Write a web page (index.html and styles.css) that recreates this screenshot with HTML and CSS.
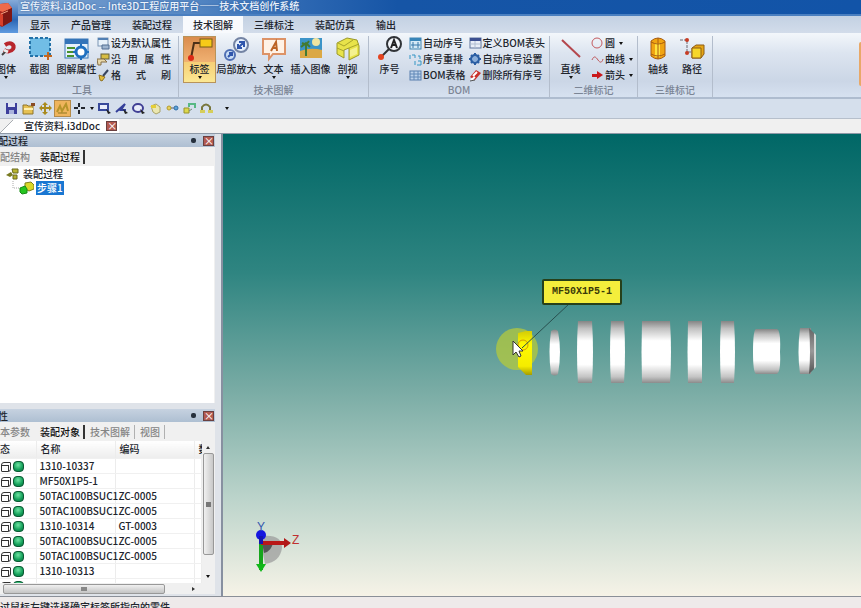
FILE: index.html
```
<!DOCTYPE html>
<html lang="zh-CN">
<head>
    <meta charset="UTF-8">
    <meta name="viewport" content="width=device-width, initial-scale=1.0">
    <title>宣传资料.i3dDoc -- Inte3D工程应用平台</title>
    <link rel="stylesheet" href="styles.css">
</head>
<body>
    <header class="top">
        <div class="logo">
            <svg width="18" height="32" viewBox="0 0 18 32">
                <path d="M0 4L8 3L12 8L12 21L2 27L0 26Z" fill="#a8241c"/>
                <path d="M0 4L8 3L12 8L3 12L0 11Z" fill="#ee6a4c"/>
                <path d="M3 12L12 8V21L3 26Z" fill="#7e1714"/>
                <path d="M0 13L3 15V26L0 25Z" fill="#d8402c"/>
                <path d="M1 14L8 11" stroke="#f2a080" stroke-width="1"/>
            </svg>
        </div>
        <div class="top-rows">
            <h1 class="title">宣传资料.i3dDoc -- Inte3D工程应用平台——技术文档创作系统</h1>
            <nav class="ribbon-tabs">
                <button>显示</button>
                <button>产品管理</button>
                <button>装配过程</button>
                <button class="active">技术图解</button>
                <button>三维标注</button>
                <button>装配仿真</button>
                <button>输出</button>
            </nav>
        </div>
    </header>

    <!-- 功能区 -->
    <section class="ribbon">
        <div class="group group-first">
            <div class="tools">
                <button class="big narrow">
                    <svg width="26" height="26" viewBox="0 0 26 26"><path d="M12 9C18 5 22 9 20 13C18 16 14 16 11 14" fill="none" stroke="#b8262c" stroke-width="4"/><path d="M9 19L14 14" stroke="#444" stroke-width="2"/><path d="M11 14L15 16" stroke="#eee" stroke-width="3"/></svg>
                    <span>图体</span><i class="arrow"></i>
                </button>
                <button class="big">
                    <svg width="26" height="26" viewBox="0 0 26 26"><rect x="3" y="2" width="20" height="18" fill="#71bde6" stroke="#2372a8" stroke-width="2" stroke-dasharray="3 2"/><path d="M21 16V24M17 20H25" stroke="#c4671e" stroke-width="2"/></svg>
                    <span>截图</span>
                </button>
                <button class="big">
                    <svg width="26" height="26" viewBox="0 0 26 26"><rect x="1" y="3" width="23" height="19" fill="#e6f1fa" stroke="#3a78b8"/><path d="M1 3H24V8H1Z" fill="#3474b8"/><path d="M3 12H11M3 16H9M3 20H10" stroke="#48922d" stroke-width="2"/><circle cx="17" cy="16" r="5" fill="#fff" stroke="#1f70c0" stroke-width="3"/><path d="M17 8V11M17 21V24M9 16H12M22 16H25" stroke="#1f70c0" stroke-width="2"/></svg>
                    <span>图解属性</span>
                </button>
                <div class="small-list">
                    <button class="small"><svg width="13" height="13" viewBox="0 0 13 13"><rect x="1" y="1" width="10" height="8" fill="#e8f2fb" stroke="#7d96b4"/><path d="M1 1H11V3H1Z" fill="#5280b4"/><path d="M5 8H12V12H5Z" fill="#9db4cf" stroke="#536f92"/></svg><span>设为默认属性</span></button>
                    <button class="small"><svg width="13" height="13" viewBox="0 0 13 13"><rect x="4" y="1" width="8" height="5" fill="#d7bd43" stroke="#65603b"/><path d="M0 6H7L10 9H4V12H1Z" fill="#e8d8aa" stroke="#866e45"/></svg><span class="spread">沿用属性</span></button>
                    <button class="small"><svg width="13" height="13" viewBox="0 0 13 13"><path d="M11 1L6 7" stroke="#38455e" stroke-width="2"/><path d="M2 6L8 8L5 12L3 11Z" fill="#e3bc38" stroke="#8e7020"/></svg><span class="spread">格式刷</span></button>
                </div>
            </div>
            <h2>工具</h2>
        </div>

        <div class="group">
            <div class="tools">
                <button class="big selected">
                    <svg width="26" height="26" viewBox="0 0 26 26"><path d="M4 22L7 7H14" fill="none" stroke="#4b2f18" stroke-width="2"/><rect x="13" y="3" width="12" height="8" fill="#f6ca18" stroke="#775b14"/><circle cx="4" cy="22" r="3" fill="#db2915"/></svg>
                    <span>标签</span><i class="arrow"></i>
                </button>
                <button class="big">
                    <svg width="26" height="26" viewBox="0 0 26 26"><circle cx="17" cy="9" r="7" fill="#e5effc" stroke="#7484a4" stroke-width="2"/><circle cx="6" cy="19" r="5" fill="#c9ddf5" stroke="#4f6fb4" stroke-width="2"/><path d="M14 12L20 6M15 6H20V11M14 8V12H18M4 21L8 17M5 17H8V20" fill="none" stroke="#3056ac" stroke-width="2"/></svg>
                    <span>局部放大</span>
                </button>
                <button class="big">
                    <svg width="26" height="26" viewBox="0 0 26 26"><path d="M2 3H24V18H12L8 23V18H2Z" fill="#fff2e6" stroke="#dd9367" stroke-width="2"/><path d="M10 15L15 6L16 15M12 12H16" fill="none" stroke="#bd6425" stroke-width="2"/></svg>
                    <span>文本</span><i class="arrow"></i>
                </button>
                <button class="big">
                    <svg width="26" height="26" viewBox="0 0 26 26"><rect x="2" y="2" width="22" height="20" fill="#3c94c8"/><path d="M2 15Q13 11 24 14V22H2Z" fill="#dba844"/><circle cx="18" cy="6" r="4" fill="#f0e4a0"/><path d="M8 20V9M3 11L8 7L12 11M4 7L8 9L11 5" fill="none" stroke="#437a32" stroke-width="2"/></svg>
                    <span>插入图像</span>
                </button>
                <button class="big">
                    <svg width="26" height="26" viewBox="0 0 26 26"><path d="M2 7L12 2L22 4L24 10V19L14 24V12L9 14V22L2 18Z" fill="#e8e34a" stroke="#9b992a"/><path d="M14 12L24 8M2 12L9 15M3 7L9 10L18 4" fill="none" stroke="#a7a42c"/><path d="M15 14L22 11V18L15 21Z" fill="#f4f190"/></svg>
                    <span>剖视</span><i class="arrow"></i>
                </button>
            </div>
            <h2>技术图解</h2>
        </div>

        <div class="group group-bom">
            <div class="tools">
                <button class="big">
                    <svg width="26" height="26" viewBox="0 0 26 26"><path d="M4 21L13 12" stroke="#333" stroke-width="2"/><circle cx="17" cy="8" r="7" fill="#f3f6fa" stroke="#303337" stroke-width="2"/><path d="M14 12L17 4L20 12M15 9H19" fill="none" stroke="#222" stroke-width="2"/><circle cx="4" cy="21" r="3" fill="#e44420"/></svg>
                    <span>序号</span>
                </button>
                <div class="small-list">
                    <button class="small"><svg width="13" height="13" viewBox="0 0 13 13"><rect x="1" y="1" width="11" height="11" fill="#d5e9f6" stroke="#4386b1"/><path d="M1 1H12V4H1Z" fill="#3985b8"/><path d="M4 5V11M9 5V11M2 8H11" stroke="#3779aa"/></svg><span>自动序号</span></button>
                    <button class="small"><svg width="13" height="13" viewBox="0 0 13 13"><path d="M1 2V6M3 2H6V5M6 8V12M9 8H12V12M8 12H12M9 3H11V6" fill="none" stroke="#3395c4"/></svg><span>序号重排</span></button>
                    <button class="small"><svg width="13" height="13" viewBox="0 0 13 13"><rect x="1" y="2" width="11" height="9" fill="#bdd2eb" stroke="#587fae"/><path d="M1 5H12M1 8H12M5 2V11M9 2V11" stroke="#6188b7"/></svg><span>BOM表格</span></button>
                </div>
                <div class="small-list">
                    <button class="small"><svg width="13" height="13" viewBox="0 0 13 13"><rect x="1" y="1" width="11" height="10" fill="#e9eef7" stroke="#5f749b"/><path d="M1 1H12V4H1Z" fill="#3c5090"/><path d="M1 7H12M6 4V11" stroke="#b0bdd0"/></svg><span>定义BOM表头</span></button>
                    <button class="small"><svg width="13" height="13" viewBox="0 0 13 13"><circle cx="6" cy="6" r="4" fill="#8baed9" stroke="#2c5fa3" stroke-width="2"/><path d="M6 0V3M6 9V12M0 6H3M9 6H12M2 2L4 4M8 8L10 10M2 10L4 8M8 4L10 2" stroke="#2c5fa3" stroke-width="2"/></svg><span>自动序号设置</span></button>
                    <button class="small"><svg width="13" height="13" viewBox="0 0 13 13"><path d="M1 8L7 1L12 4L6 11Z" fill="#c9302a"/><path d="M4 7L8 3M2 11L6 8" stroke="#fff" stroke-width="2"/><path d="M1 12L6 11" stroke="#555"/></svg><span>删除所有序号</span></button>
                </div>
            </div>
            <h2>BOM</h2>
        </div>

        <div class="group">
            <div class="tools">
                <button class="big">
                    <svg width="26" height="26" viewBox="0 0 26 26"><path d="M4 4L22 21" stroke="#b4474d" stroke-width="2"/></svg>
                    <span>直线</span><i class="arrow"></i>
                </button>
                <div class="small-list">
                    <button class="small"><svg width="13" height="13" viewBox="0 0 13 13"><circle cx="6" cy="6" r="5" fill="none" stroke="#c45a5e"/></svg><span>圆</span><i class="arrow"></i></button>
                    <button class="small"><svg width="13" height="13" viewBox="0 0 13 13"><path d="M1 7C3 2 5 4 7 7S11 10 12 6" fill="none" stroke="#c0575a"/></svg><span>曲线</span><i class="arrow"></i></button>
                    <button class="small"><svg width="13" height="13" viewBox="0 0 13 13"><path d="M1 5H6V2L12 6L6 10V8H1Z" fill="#c9181c"/></svg><span>箭头</span><i class="arrow"></i></button>
                </div>
            </div>
            <h2>二维标记</h2>
        </div>

        <div class="group group-wide">
            <div class="tools">
                <button class="big narrow">
                    <svg width="26" height="26" viewBox="0 0 26 26"><path d="M6 5Q13 -1 20 5V20Q13 26 6 20Z" fill="#f0a412" stroke="#a85c10"/><path d="M10 7H15V21H10Z" fill="#ffe23c"/><path d="M6 6Q13 10 20 6M6 18Q13 22 20 18M13 2V23" fill="none" stroke="#a85c10"/></svg>
                    <span>轴线</span>
                </button>
                <button class="big narrow">
                    <svg width="26" height="26" viewBox="0 0 26 26"><path d="M1 4H8V16H14" fill="none" stroke="#6c6970" stroke-dasharray="3 1"/><circle cx="8" cy="4" r="2" fill="#c73c24"/><circle cx="8" cy="17" r="2" fill="#c73c24"/><path d="M13 12L17 9H25V18L22 22H13Z" fill="#e5a514" stroke="#8e5c14"/><path d="M13 12H22V22H13Z" fill="#f6d72a" stroke="#8e5c14"/></svg>
                    <span>路径</span>
                </button>
            </div>
            <h2>三维标记</h2>
        </div>
        <div class="ribbon-edge"></div>
    </section>

    <!-- 快速工具条 -->
    <div class="quick">
        <button aria-label="保存"><svg width="13" height="13" viewBox="0 0 13 13"><path d="M1 1H12V12H1Z" fill="#3c3f9c"/><path d="M3 1H10V5H3Z" fill="#dce2f4"/><path d="M4 8H9V12H4Z" fill="#aab4dc"/></svg></button>
        <button aria-label="打开"><svg width="13" height="13" viewBox="0 0 13 13"><path d="M1 3H5L6 4H11V12H1Z" fill="#e6c153" stroke="#8f742b"/><path d="M2 7H11" stroke="#fff0b0" stroke-width="2"/><path d="M9 1H13V4H9Z" fill="#8a4c25"/></svg></button>
        <button aria-label="平移"><svg width="13" height="13" viewBox="0 0 13 13"><path d="M6 1V12M1 6H12" stroke="#a98b1e" stroke-width="2"/><path d="M6 0L9 3H3ZM6 13L3 10H9ZM0 6L3 3V9ZM13 6L10 3V9Z" fill="#a98b1e"/></svg></button>
        <button class="selected" aria-label="旋转"><svg width="13" height="13" viewBox="0 0 13 13"><path d="M1 10L4 4L6 9L10 2L12 9" fill="none" stroke="#b6942a" stroke-width="2"/><path d="M2 11H11" stroke="#8f7820"/></svg></button>
        <button aria-label="定位"><svg width="13" height="13" viewBox="0 0 13 13"><path d="M6 1V5M6 8V12M1 6H5M8 6H12" stroke="#22262e" stroke-width="2"/></svg></button>
        <i class="arrow"></i>
        <button aria-label="框选"><svg width="13" height="13" viewBox="0 0 13 13"><rect x="1" y="2" width="9" height="6" fill="#e9edfa" stroke="#38499b" stroke-width="2"/><path d="M8 7L13 11L10 12Z" fill="#222"/></svg></button>
        <button aria-label="线选"><svg width="13" height="13" viewBox="0 0 13 13"><path d="M1 10L10 2L6 8L11 8" fill="none" stroke="#35409a" stroke-width="2"/><path d="M8 7L13 11L10 12Z" fill="#222"/></svg></button>
        <button aria-label="圈选"><svg width="13" height="13" viewBox="0 0 13 13"><ellipse cx="6" cy="6" rx="5" ry="4" fill="#e9edfa" stroke="#403f94" stroke-width="2"/><path d="M8 7L13 11L10 12Z" fill="#222"/></svg></button>
        <button aria-label="实体"><svg width="13" height="13" viewBox="0 0 13 13"><path d="M2 4L7 2L11 5V10L7 12L4 10Z" fill="#ebe7b0" stroke="#aaa46a"/><path d="M2 3H7V6H2Z" fill="#e4ce38"/></svg></button>
        <button aria-label="关联"><svg width="13" height="13" viewBox="0 0 13 13"><circle cx="3" cy="6" r="2" fill="#e6d15e" stroke="#b59b2c"/><path d="M5 6H8" stroke="#666"/><circle cx="10" cy="6" r="2" fill="#5fa4d8" stroke="#2f6ea8"/></svg></button>
        <button aria-label="装配"><svg width="13" height="13" viewBox="0 0 13 13"><path d="M1 6H6V11H1Z" fill="#dcd84c" stroke="#98922c"/><path d="M6 5V2H12V6" fill="none" stroke="#58b884" stroke-width="2"/><path d="M6 9L9 7" stroke="#787"/></svg></button>
        <button aria-label="翻转"><svg width="13" height="13" viewBox="0 0 13 13"><path d="M2 9V5Q6 0 10 5V9" fill="none" stroke="#78763c" stroke-width="2"/><path d="M0 8H5V11H0ZM8 8H13V11H8Z" fill="#d6ce5a"/></svg></button>
        <i class="arrow"></i>
    </div>

    <div class="doc-tabs">
        <svg width="14" height="14" viewBox="0 0 14 14"><path d="M0 14L13 1H14V14Z" fill="#fff"/><path d="M0 14L13 1" stroke="#a9adb2"/></svg>
        <div class="doc-tab"><span>宣传资料.i3dDoc</span><button class="close" aria-label="关闭文档">×</button></div>
    </div>

    <main class="work">
        <aside class="dock">
            <section class="panel panel-tree">
                <div class="panel-head"><h3>装配过程</h3><i class="pin"></i><button class="close" aria-label="关闭">×</button></div>
                <div class="panel-tabs"><button>装配结构</button><button class="active">装配过程</button></div>
                <ul class="tree">
                    <li>
                        <svg width="14" height="12" viewBox="0 0 14 12"><path d="M1 7L6 4L8 7L5 9Z" fill="#787a20"/><path d="M7 1H13V5H8ZM8 7H12V11H8Z" fill="#b9b52e" stroke="#68691e"/></svg>
                        <span>装配过程</span>
                    </li>
                    <li class="child">
                        <svg width="22" height="14" viewBox="0 0 22 14"><path d="M1 0V7H8" fill="none" stroke="#aaa" stroke-dasharray="1 1"/><path d="M13 2L19 1L22 4V8L17 10L13 8Z" fill="#d9d827" stroke="#80801c"/><path d="M8 7L13 5L15 8V12L10 13L8 11Z" fill="#25c51f" stroke="#178a15"/></svg>
                        <span class="picked">步骤1</span>
                    </li>
                </ul>
            </section>

            <section class="panel">
                <div class="panel-head"><h3>属性</h3><i class="pin"></i><button class="close" aria-label="关闭">×</button></div>
                <div class="panel-tabs"><button>基本参数</button><button class="active">装配对象</button><button class="split">技术图解</button><button class="split">视图</button></div>
                <div class="list">
                    <div class="list-body">
                        <table>
                            <colgroup><col class="c-state"><col class="c-name"><col class="c-code"><col></colgroup>
                            <thead><tr><th>状态</th><th>名称</th><th>编码</th><th>数</th></tr></thead>
                            <tbody>
                                <tr><td><i class="box"></i><i class="ball"></i></td><td>1310-10337</td><td></td><td></td></tr>
                                <tr><td><i class="box"></i><i class="ball"></i></td><td>MF50X1P5-1</td><td></td><td></td></tr>
                                <tr><td><i class="box"></i><i class="ball"></i></td><td>50TAC100BSUC1</td><td>ZC-0005</td><td></td></tr>
                                <tr><td><i class="box"></i><i class="ball"></i></td><td>50TAC100BSUC1</td><td>ZC-0005</td><td></td></tr>
                                <tr><td><i class="box"></i><i class="ball"></i></td><td>1310-10314</td><td>GT-0003</td><td></td></tr>
                                <tr><td><i class="box"></i><i class="ball"></i></td><td>50TAC100BSUC1</td><td>ZC-0005</td><td></td></tr>
                                <tr><td><i class="box"></i><i class="ball"></i></td><td>50TAC100BSUC1</td><td>ZC-0005</td><td></td></tr>
                                <tr><td><i class="box"></i><i class="ball"></i></td><td>1310-10313</td><td></td><td></td></tr>
                                <tr><td><i class="box"></i><i class="ball"></i></td><td></td><td></td><td></td></tr>
                            </tbody>
                        </table>
                    </div>
                    <div class="vscroll"><i class="arrow up"></i><div class="thumb"></div><i class="arrow"></i></div>
                </div>
                <div class="hscroll"><div class="thumb"></div><i class="arrow right"></i></div>
            </section>
        </aside>

        <!-- 三维视图 -->
        <section class="view">
            <svg class="scene" width="100%" height="100%">
                <defs>
                    <linearGradient id="metal" x1="0" y1="0" x2="0" y2="1">
                        <stop offset="0" stop-color="#858585"/>
                        <stop offset="0.12" stop-color="#c0c0c0"/>
                        <stop offset="0.32" stop-color="#fff"/>
                        <stop offset="0.7" stop-color="#fff"/>
                        <stop offset="0.9" stop-color="#c4c4c4"/>
                        <stop offset="1" stop-color="#8b8b8b"/>
                    </linearGradient>
                    <linearGradient id="chamfer" x1="0" y1="0" x2="0" y2="1">
                        <stop offset="0" stop-color="#666"/>
                        <stop offset="0.5" stop-color="#999"/>
                        <stop offset="1" stop-color="#555"/>
                    </linearGradient>
                    <linearGradient id="gold" x1="0" y1="0" x2="0" y2="1">
                        <stop offset="0" stop-color="#d3cb06"/>
                        <stop offset="0.3" stop-color="#fffa00"/>
                        <stop offset="0.8" stop-color="#f5ec00"/>
                        <stop offset="1" stop-color="#a59c00"/>
                    </linearGradient>
                </defs>
                <circle cx="294" cy="215" r="21" fill="#b4c93c" fill-opacity="0.75"/>
                <path d="M295 199L303 197H309V241H303L295 233Z" fill="url(#gold)"/>
                <circle cx="300" cy="211" r="5" fill="none" stroke="#d59b00"/>
                <path d="M346 170L299 214" stroke="#28504f"/>
                <g fill="url(#metal)">
                    <path d="M328 197Q332 194 335 197Q339 218 335 240Q332 243 328 240Q325 218 328 197Z"/>
                    <path d="M355 187H369Q371 218 369 249H355Q353 218 355 187Z"/>
                    <path d="M388 187H401Q403 218 401 249H388Q386 218 388 187Z"/>
                    <path d="M419 187H447Q449 218 447 249H419Q418 218 419 187Z"/>
                    <path d="M465 187H479V249H465Q464 218 465 187Z"/>
                    <path d="M498 187H511Q513 218 511 249H498Q496 218 498 187Z"/>
                    <path d="M533 195H554Q558 196 557 218Q558 238 554 240H533Q530 238 530 218Q530 196 533 195Z"/>
                    <path d="M577 194H588V240H577Q574 218 577 194Z"/>
                </g>
                <path d="M586 194L591 199V235L586 240Q588 218 586 194Z" fill="url(#chamfer)"/>
                <path d="M591 199L593 201V233L591 235Z" fill="#d5dad8"/>
                <path d="M290 207V221L293 218L296 223L298 222L296 217H300Z" fill="#fff" stroke="#333"/>
            </svg>
            <div class="callout">MF50X1P5-1</div>
            <svg class="axes" width="46" height="56" viewBox="0 0 46 56">
                <path d="M10 16Q30 14 30 28Q28 42 13 44L9 24Z" fill="#999" fill-opacity="0.7"/>
                <path d="M10 22H21Q20 31 12 33Z" fill="#555"/>
                <path d="M9 23V50" stroke="#16a51c" stroke-width="4"/>
                <path d="M4 44H14L9 52Z" fill="#10b818"/>
                <path d="M9 23H34" stroke="#b91818" stroke-width="4"/>
                <path d="M32 18L39 23L32 28Z" fill="#b01818"/>
                <circle cx="9" cy="15" r="5" fill="#1515e0"/>
                <path d="M9 16V24" stroke="#1515b0" stroke-width="4"/>
            </svg>
            <span class="axis-y">Y</span>
            <span class="axis-z">Z</span>
        </section>
    </main>

    <footer class="status">通过鼠标左键选择确定标签所指向的零件</footer>
</body>
</html>
```
FILE: styles.css
```
* {
    box-sizing: border-box;
}

body {
    margin: 0;
    height: 100vh;
    overflow: hidden;
    display: flex;
    flex-direction: column;
    background-color: #eeeeee;
    color: #20242c;
    font-family: "Noto Sans CJK SC", sans-serif;
    font-size: 10px;
    font-weight: 500;
    line-height: 14px;
}

h1, h2, h3, ul {
    margin: 0;
    padding: 0;
    font-size: 10px;
    font-weight: 500;
}

button {
    margin: 0;
    padding: 0;
    border: none;
    background: none;
    color: inherit;
    font: inherit;
    white-space: nowrap;
}

svg {
    display: block;
    flex-shrink: 0;
}

/* 下拉小箭头 */
.arrow {
    width: 0;
    height: 0;
    border: 2px solid transparent;
    border-top: 3px solid #111;
    border-bottom: none;
}

.arrow.up {
    border-top: none;
    border-bottom: 3px solid #333;
}

.arrow.right {
    border: 2px solid transparent;
    border-left: 3px solid #333;
    border-right: none;
}

/* 标题栏和菜单 */
.top {
    display: flex;
    flex-shrink: 0;
}

.logo {
    width: 18px;
    background: linear-gradient(#86aad8, #2b66b4 60%, #5f9be0);
}

.top-rows {
    flex: 1;
}

.title {
    height: 16px;
    padding-left: 2px;
    line-height: 12px;
    color: #eaf2fc;
    text-shadow: 0 0 2px #2c5a98;
    background: linear-gradient(90deg, #7ba1d0, #5688c4 20%, #2c67b2 34%, #1655a6 45%, #1254a8);
    border-bottom: 2px solid #4a7fc0;
}

.ribbon-tabs {
    display: flex;
    gap: 1px;
    height: 17px;
    padding-left: 2px;
    background: linear-gradient(#c3d1e3, #d2dcea);
}

.ribbon-tabs button {
    padding: 0 10px;
    line-height: 16px;
}

.ribbon-tabs .active {
    background-color: #f8fafd;
}

/* 功能区 */
.ribbon {
    display: flex;
    flex-shrink: 0;
    height: 66px;
    padding-top: 3px;
    background: linear-gradient(#f3f7fb, #dde5f0 30%, #cbd6e6 75%, #d6e1f0);
    border-bottom: 2px solid #aebccf;
}

.group {
    display: flex;
    flex-direction: column;
    padding: 0 4px;
    border-right: 1px solid #b3bdcc;
}

.group-first {
    padding: 0 7px 0 0;
    margin-left: -7px;
}

.group-wide {
    padding: 0 7px;
}

.tools {
    display: flex;
    gap: 4px;
    height: 47px;
}

.group-bom .tools {
    gap: 3px;
}

.group-wide .tools {
    gap: 8px;
}

.group h2 {
    color: #7b8595;
    text-align: center;
    line-height: 13px;
}

.big {
    width: 33px;
    display: flex;
    flex-direction: column;
    align-items: center;
}

.big.narrow {
    width: 26px;
}

.big.selected {
    background: linear-gradient(#d98b4c, #f0b172 55%, #f6cf76 56%, #fce994);
    outline: 1px solid #b8935a;
    outline-offset: -1px;
}

.small-list {
    display: flex;
    flex-direction: column;
    gap: 2px;
}

.small {
    display: flex;
    align-items: center;
    gap: 1px;
    height: 14px;
}

.small .arrow {
    margin-left: 3px;
}

.spread {
    flex: 1;
    text-align-last: justify;
    text-justify: inter-character;
}

.ribbon-edge {
    width: 2px;
    height: 44px;
    margin-left: auto;
    margin-top: 6px;
    background-color: #e8a868;
    border-radius: 2px 0 0 2px;
}

/* 快速工具条 */
.quick {
    display: flex;
    flex-shrink: 0;
    align-items: center;
    height: 20px;
    padding-left: 3px;
    background-color: #d5dfec;
    border-bottom: 1px solid #b6bfcb;
}

.quick button {
    width: 17px;
    height: 17px;
    padding: 2px;
}

.quick .selected {
    background-color: #efb45c;
    outline: 1px solid #b58b4a;
    outline-offset: -1px;
}

.quick .arrow {
    margin: 0 2px;
}

.quick .arrow:last-child {
    margin-left: 10px;
}

.doc-tabs {
    display: flex;
    flex-shrink: 0;
    height: 14px;
    background-color: #f0f0f0;
}

.doc-tab {
    display: flex;
    align-items: center;
    gap: 6px;
    padding: 0 2px 0 10px;
    background-color: #ffffff;
}

.close {
    width: 11px;
    height: 10px;
    border: 1px solid #6a4040;
    background-color: #b35a50;
    color: #ffffff;
    line-height: 8px;
}

/* 工作区 */
.work {
    flex: 1;
    display: flex;
    min-height: 0;
    border-top: 1px solid #8d98a6;
    border-bottom: 1px solid #8a8f98;
}

.dock {
    width: 237px;
    margin-left: -14px;
    padding: 0 6px 2px 0;
    flex-shrink: 0;
    display: flex;
    flex-direction: column;
    gap: 6px;
    background-color: #dfe3e9;
    border-right: 2px solid #8790a0;
}

.panel {
    background-color: #f0f0f0;
}

.panel-tree {
    flex: 1;
    display: flex;
    flex-direction: column;
}

.panel-head {
    display: flex;
    align-items: center;
    gap: 7px;
    height: 13px;
    padding: 0 1px 0 2px;
    background: linear-gradient(#c6d2e0, #aebfd2);
}

.panel-head h3 {
    flex: 1;
}

.pin {
    width: 5px;
    height: 5px;
    border-radius: 2px;
    background-color: #26303c;
}

.panel-tabs {
    display: flex;
    align-items: center;
    gap: 5px;
    height: 19px;
    padding-left: 4px;
    color: #858585;
}

.panel-tabs button {
    padding-right: 4px;
    border-right: 1px solid transparent;
}

.panel-tabs .active {
    padding-right: 3px;
    color: #111111;
    border-right: 2px solid #333333;
}

.panel-tabs .split {
    border-right-color: #b0b0b0;
}

.tree {
    flex: 1;
    margin-right: 1px;
    padding: 1px 0 0 19px;
    list-style: none;
    background-color: #ffffff;
}

.tree li {
    display: flex;
    align-items: center;
    gap: 4px;
    height: 14px;
}

.tree .child {
    padding-left: 7px;
    gap: 2px;
}

.picked {
    padding: 0 1px;
    background-color: #1977d2;
    color: #ffffff;
}

/* 对象列表 */
.list {
    display: flex;
    height: 142px;
    margin-right: 1px;
    background-color: #ffffff;
}

.list-body {
    flex: 1;
    overflow: hidden;
}

table {
    width: 100%;
    table-layout: fixed;
    border-collapse: collapse;
}

.c-state {
    width: 50px;
}

.c-name, .c-code {
    width: 79px;
}

th, td {
    height: 15px;
    padding: 0 0 0 4px;
    border-right: 1px solid #ececec;
    border-bottom: 1px solid #f0f0f0;
    line-height: 14px;
    text-align: left;
    font-weight: 500;
    white-space: nowrap;
}

th {
    height: 17px;
    background: linear-gradient(#ffffff, #ededed);
}

td:first-child {
    padding-left: 15px;
}

td:nth-child(2), td:nth-child(3) {
    padding-left: 3px;
}

.box, .ball {
    display: inline-block;
    width: 11px;
    height: 11px;
    margin-right: 2px;
    vertical-align: middle;
}

.box {
    width: 10px;
    height: 10px;
    border: 1px solid #333333;
    border-radius: 3px 1px;
    background: linear-gradient(#333333, #333333) 0 2px / 6px 1px no-repeat, linear-gradient(#333333, #333333) 6px 2px / 1px 6px no-repeat;
}

.ball {
    border-radius: 4px;
    border: 1px solid #0c5a34;
    background: radial-gradient(circle at 4px 3px, #6fe3a2, #14a05a 60%, #0a7340);
}

.vscroll {
    width: 12px;
    display: flex;
    flex-direction: column;
    align-items: center;
    gap: 4px;
    padding: 5px 0;
    background-color: #f0f0f0;
}

.thumb {
    border: 1px solid #989898;
    border-radius: 2px;
    background-color: #d2d2d2;
}

.vscroll .thumb {
    width: 11px;
    height: 102px;
    margin-bottom: auto;
    background: linear-gradient(#777777, #777777) center / 5px 5px no-repeat, linear-gradient(90deg, #f0f0f0, #c8c8c8);
}

.hscroll {
    display: flex;
    align-items: center;
    justify-content: space-between;
    height: 11px;
    padding: 0 20px 0 17px;
}

.hscroll .thumb {
    width: 162px;
    height: 10px;
    background: linear-gradient(#888888, #888888) center / 6px 4px no-repeat, linear-gradient(#f0f0f0, #c4c4c4);
}

/* 三维视图 */
.view {
    flex: 1;
    position: relative;
    overflow: hidden;
    background: linear-gradient(#006766, #2f8581 30%, #78aba4 55%, #bcd4cb 79%, #f6f3e7);
}

.scene {
    position: absolute;
    left: 0;
    top: 0;
}

.callout {
    position: absolute;
    left: 319px;
    top: 145px;
    padding: 3px 8px;
    border: 2px solid #26401a;
    border-radius: 2px;
    background-color: #f4ee3c;
    color: #3a3a08;
    font-family: "Liberation Mono", monospace;
    font-weight: bold;
    line-height: 16px;
}

.axes {
    position: absolute;
    left: 29px;
    bottom: 20px;
}

.axis-y, .axis-z {
    position: absolute;
    left: 69px;
    bottom: 49px;
    color: #c03030;
    font-family: "Liberation Sans", sans-serif;
    font-size: 12px;
}

.axis-y {
    left: 34px;
    bottom: 62px;
    color: #3458ae;
}

.status {
    height: 11px;
    flex-shrink: 0;
    margin-left: -10px;
    padding-top: 3px;
    overflow: hidden;
    background-color: #eeeaea;
}
```
